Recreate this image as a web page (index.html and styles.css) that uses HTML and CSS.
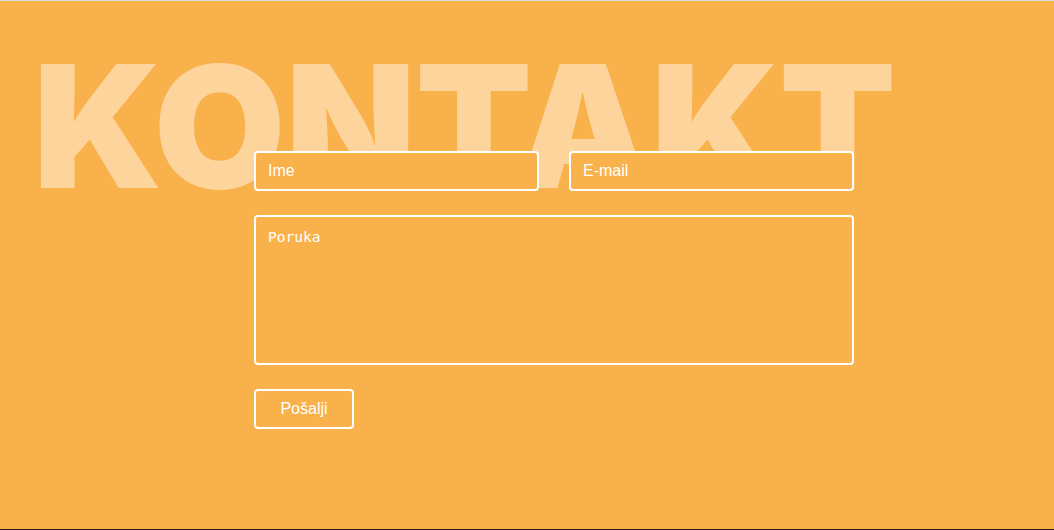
FILE: index.html
```html
<!DOCTYPE html>
<html lang="hr">
<head>
<meta charset="utf-8">
<title>Kontakt</title>
<link rel="stylesheet" href="styles.css">
</head>
<body>
<section class="contact">
  <h1 class="bg-title">KONTAKT</h1>
  <form class="form">
    <div class="row">
      <input class="field" type="text" placeholder="Ime">
      <input class="field" type="email" placeholder="E-mail">
    </div>
    <textarea class="field area" placeholder="Poruka"></textarea>
    <button class="send" type="button">Pošalji</button>
  </form>
</section>
</body>
</html>
```
FILE: styles.css
```css
html, body {
  margin: 0;
  padding: 0;
}
body {
  background: #222;
  font-family: "Liberation Sans", Arial, sans-serif;
}
.contact {
  position: relative;
  box-sizing: border-box;
  height: 529px;
  background: #f9b14b;
  border-top: 1px solid #dcdcdc;
  padding: 150px 0 0 254px;
  overflow: hidden;
}
.bg-title {
  position: absolute;
  left: 33px;
  top: 40px;
  margin: 0;
  font-family: "Inter", "Liberation Sans", sans-serif;
  font-weight: 900;
  font-size: 170px;
  line-height: 1;
  letter-spacing: -0.5px;
  color: rgba(255, 255, 255, 0.45);
  white-space: nowrap;
}
.form {
  position: relative;
  width: 600px;
  display: flex;
  flex-direction: column;
  gap: 24px;
}
.row {
  display: flex;
  gap: 30px;
}
.field {
  box-sizing: border-box;
  width: 100%;
  height: 40px;
  padding: 0 12px;
  background: #f9b14b;
  border: 2px solid #fff;
  border-radius: 4px;
  color: #fff;
  font-family: "Liberation Sans", Arial, sans-serif;
  font-size: 16px;
  outline: none;
}
.field::placeholder {
  color: #fff;
  opacity: 1;
}
.area {
  height: 150px;
  padding: 12px 12px;
  resize: none;
  font-family: "DejaVu Sans Mono", monospace;
  font-size: 14.5px;
}
.send {
  box-sizing: border-box;
  width: 100px;
  height: 40px;
  background: #f9b14b;
  border: 2px solid #fff;
  border-radius: 4px;
  color: #fff;
  font-family: "Liberation Sans", Arial, sans-serif;
  font-size: 16px;
}
```
